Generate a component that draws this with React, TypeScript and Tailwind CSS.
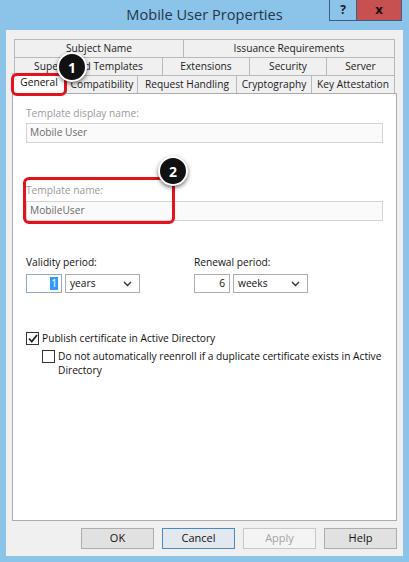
import React from "react";

const font = { fontFamily: '"Open Sans", "Liberation Sans", sans-serif' };

function Chevron() {
  return (
    <svg width="9" height="6" viewBox="0 0 9 6" className="shrink-0">
      <polyline points="1,1 4.5,4.5 8,1" fill="none" stroke="#333" strokeWidth="1.4" />
    </svg>
  );
}

function Tab({ w, label, last }: { w: number; label: string; last?: boolean }) {
  return (
    <div
      className={`h-[18px] flex items-center justify-center border-t border-l border-[#b9b9b9] bg-[#f0f0f0] text-[10.2px] text-[#1a1a1a] whitespace-nowrap ${last ? "border-r" : ""}`}
      style={{ width: w }}
    >
      {label}
    </div>
  );
}

function Select({ value }: { value: string }) {
  return (
    <div className="w-[75px] h-[19px] border border-[#acacac] bg-white flex items-center justify-between pl-[4px] pr-[7px] text-[10.2px] text-[#111]">
      <span>{value}</span>
      <Chevron />
    </div>
  );
}

function Badge({ n, className }: { n: string; className: string }) {
  return (
    <div
      className={`absolute w-[30px] h-[30px] rounded-full bg-[#111] border-2 border-white shadow-[0_2px_4px_rgba(0,0,0,0.55)] flex items-center justify-center text-white font-bold text-[14px] ${className}`}
    >
      {n}
    </div>
  );
}

function Btn({ label, variant }: { label: string; variant?: "default" | "disabled" }) {
  const cls =
    variant === "default"
      ? "border-[#4a8ac2] bg-[#e3e8ee] text-[#111]"
      : variant === "disabled"
      ? "border-[#c8c8c8] bg-[#f4f4f4] text-[#a3a3a3]"
      : "border-[#adadad] bg-[#e1e1e1] text-[#111]";
  return (
    <div className={`w-[73px] h-[21px] border flex items-center justify-center text-[11px] ${cls}`}>{label}</div>
  );
}

export default function App() {
  return (
    <div className="relative w-[409px] h-[562px] bg-[#8cc3e9] flex flex-col overflow-hidden" style={font}>
      {/* title bar */}
      <div className="relative h-[30px] shrink-0">
        <div className="w-full text-center pt-[4px] text-[14.6px] leading-[20px] text-[#23364a]">Mobile User Properties</div>
        <div className="absolute top-0 right-[7px] flex">
          <div className="w-[28px] h-[21px] border border-[#3d5e80] border-t-0 flex items-center justify-center text-[12px] font-bold text-[#1a1a1a]">?</div>
          <div className="w-[45px] h-[21px] bg-[#c75050] border border-[#3d5e80] border-l-0 border-t-0 flex items-center justify-center text-[13px] font-bold text-[#111]">x</div>
        </div>
      </div>

      {/* client */}
      <div className="flex-1 mx-[6px] mb-[6px] bg-[#f0f0f0] pt-[9px] px-[6px] flex flex-col">
        {/* tab rows */}
        <div className="flex mx-[2px]">
          <Tab w={169} label="Subject Name" />
          <Tab w={212} label="Issuance Requirements" last />
        </div>
        <div className="flex mx-[2px]">
          <Tab w={148} label="Superseded Templates" />
          <Tab w={87} label="Extensions" />
          <Tab w={77} label="Security" />
          <Tab w={69} label="Server" last />
        </div>
        <div className="flex items-end pr-[2px] h-[18px]">
          <div className="relative z-10 w-[54px] h-[21px] -mb-px bg-white border-t border-l border-r border-[#b9b9b9] flex items-center justify-center text-[10.2px] text-[#111] pb-[2px]">
            General
          </div>
          <Tab w={71} label="Compatibility" />
          <Tab w={99} label="Request Handling" />
          <Tab w={75} label="Cryptography" />
          <Tab w={84} label="Key Attestation" last />
        </div>

        {/* panel */}
        <div className="h-[428px] border border-[#acacac] bg-white pl-[13px] pt-[12px] flex flex-col text-[10.2px]">
          <div className="leading-[14px] text-[#9a9a9a]">Template display name:</div>
          <div className="mt-[3px] w-[357px] h-[20px] border border-[#d4d4d4] bg-[#fafafa] flex items-center pl-[3px] text-[#6b6b6b]">Mobile User</div>

          <div className="mt-[40px] leading-[14px] text-[#9a9a9a]">Template name:</div>
          <div className="mt-[4px] w-[357px] h-[20px] border border-[#d4d4d4] bg-[#fafafa] flex items-center pl-[3px] text-[#6b6b6b]">MobileUser</div>

          <div className="mt-[34px] flex">
            <div className="w-[168px] flex flex-col">
              <div className="leading-[14px] text-[#111]">Validity period:</div>
              <div className="mt-[5px] flex gap-[3px]">
                <div className="w-[36px] h-[19px] border border-[#8fa8c8] bg-white flex items-center justify-end pr-[3px]">
                  <span className="bg-[#3399ff] text-white px-[1px] leading-[13px]">1</span>
                </div>
                <Select value="years" />
              </div>
            </div>
            <div className="flex flex-col">
              <div className="leading-[14px] text-[#111]">Renewal period:</div>
              <div className="mt-[5px] flex gap-[3px]">
                <div className="w-[36px] h-[19px] border border-[#acacac] bg-white flex items-center justify-end pr-[4px] text-[#111]">6</div>
                <Select value="weeks" />
              </div>
            </div>
          </div>

          <div className="mt-[38px] flex items-center gap-[3px] leading-[14px] text-[#111]">
            <div className="w-[13px] h-[13px] border border-[#333] bg-white flex items-center justify-center">
              <svg width="10" height="9" viewBox="0 0 10 9">
                <polyline points="1,4.5 3.8,7.5 9,1" fill="none" stroke="#222" strokeWidth="1.8" />
              </svg>
            </div>
            <span>Publish certificate in Active Directory</span>
          </div>

          <div className="mt-[4px] ml-[16px] flex items-start gap-[3px] text-[#111]">
            <div className="mt-[1px] w-[13px] h-[13px] shrink-0 border border-[#333] bg-white" />
            <span className="leading-[14px] w-[325px]">
              Do not automatically reenroll if a duplicate certificate exists in Active Directory
            </span>
          </div>
        </div>

        {/* buttons */}
        <div className="mt-[7px] flex justify-end gap-[8px]">
          <Btn label="OK" />
          <Btn label="Cancel" variant="default" />
          <Btn label="Apply" variant="disabled" />
          <Btn label="Help" />
        </div>
      </div>

      {/* annotations */}
      <div className="absolute left-[11px] top-[73px] w-[56px] h-[23px] border-[3px] border-[#e3121c] rounded-[6px] z-20" />
      <div className="absolute left-[23px] top-[177px] w-[152px] h-[47px] border-[3px] border-[#e3121c] rounded-[6px] z-20" />
      <Badge n="1" className="left-[57px] top-[52px] z-30" />
      <Badge n="2" className="left-[158px] top-[156px] z-30" />
    </div>
  );
}
